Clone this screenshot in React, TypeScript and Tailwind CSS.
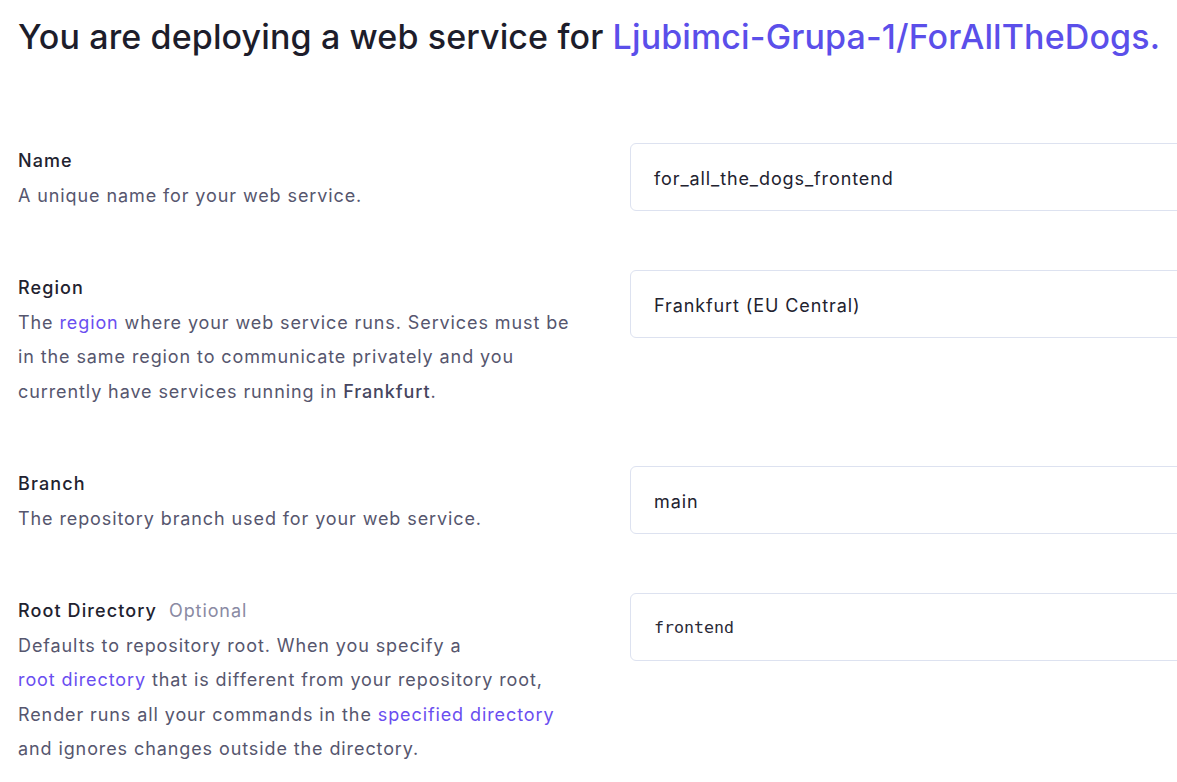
import React from "react";

const font = { fontFamily: "Inter, 'Noto Sans', sans-serif" };

function Field({
  label,
  optional,
  children,
  value,
  mono,
}: {
  label: string;
  optional?: boolean;
  children: React.ReactNode;
  value: string;
  mono?: boolean;
}) {
  return (
    <div className="flex items-start">
      <div className="w-[630px] shrink-0 pl-[18px] pt-[2px]">
        <div className="text-[18px] leading-[34.5px] font-medium text-[#22222f] tracking-[1.1px]">
          {label}
          {optional && (
            <span className="ml-3 font-normal text-[#8a8aa3] tracking-[0.9px]">Optional</span>
          )}
        </div>
        <div className="text-[18px] leading-[34.5px] text-[#56566e] whitespace-nowrap tracking-[0.9px]">
          {children}
        </div>
      </div>
      <div className="flex-1 h-[68px] min-w-[600px] mt-[1px] rounded-[6px] border border-[#dde2f0] bg-white flex items-center pl-[23px] pt-[2px]">
        {mono ? (
          <span
            className="text-[16.6px] text-[#2a2a38]"
            style={{ fontFamily: "'DejaVu Sans Mono', 'Liberation Mono', monospace" }}
          >
            {value}
          </span>
        ) : (
          <span className="text-[18px] text-[#22222f] tracking-[0.9px]">{value}</span>
        )}
      </div>
    </div>
  );
}

const Link = ({ children }: { children: React.ReactNode }) => (
  <span className="text-[#6a4ef0]">{children}</span>
);

export default function App() {
  return (
    <div className="w-[1177px] h-[782px] overflow-hidden bg-white" style={font}>
      <h1 className="pl-[18px] pt-[14px] text-[34px] leading-[46px] font-medium text-[#1d1d2b] whitespace-nowrap tracking-[0.12px]">
        You are deploying a web service for{" "}
        <span className="text-[#5b4fea]">Ljubimci-Grupa-1/ForAllTheDogs.</span>
      </h1>
      <div className="mt-[82px] flex flex-col gap-14">
        <Field label="Name" value="for_all_the_dogs_frontend">
          A unique name for your web service.
        </Field>
        <Field label="Region" value="Frankfurt (EU Central)">
          The <Link>region</Link> where your web service runs. Services must be
          <br />
          in the same region to communicate privately and you
          <br />
          currently have services running in{" "}
          <span className="font-medium text-[#46465f]">Frankfurt</span>.
        </Field>
        <Field label="Branch" value="main">
          The repository branch used for your web service.
        </Field>
        <Field label="Root Directory" optional value="frontend" mono>
          Defaults to repository root. When you specify a
          <br />
          <Link>root directory</Link> that is different from your repository root,
          <br />
          Render runs all your commands in the <Link>specified directory</Link>
          <br />
          and ignores changes outside the directory.
        </Field>
      </div>
    </div>
  );
}
